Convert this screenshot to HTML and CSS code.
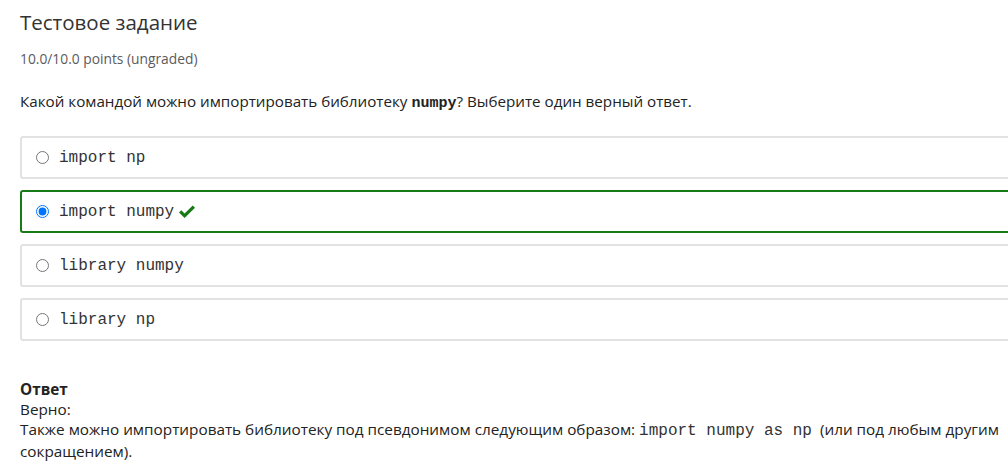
FILE: index.html
```html
<!DOCTYPE html>
<html lang="ru">
<head>
<meta charset="utf-8">
<link rel="stylesheet" href="styles.css">
</head>
<body>
<div class="problem">
  <h2 class="title">Тестовое задание</h2>
  <div class="points">10.0/10.0 points (ungraded)</div>
  <p class="question">Какой командой можно импортировать библиотеку <code class="qcode">numpy</code>? Выберите один верный ответ.</p>
  <div class="options">
    <label class="option"><input type="radio" name="q"><span class="code">import np</span></label>
    <label class="option correct"><input type="radio" name="q" checked><span class="code">import numpy</span>
      <svg class="check" viewBox="0 0 18 14" width="18" height="14"><path d="M1 7.5 L3.3 5.2 L6.6 8.5 L14.7 0.4 L17 2.7 L6.6 13.1 Z" fill="#167a16"/></svg>
    </label>
    <label class="option"><input type="radio" name="q"><span class="code">library numpy</span></label>
    <label class="option"><input type="radio" name="q"><span class="code">library np</span></label>
  </div>
  <div class="answer">
    <div class="answer-title">Ответ</div>
    <div>Верно:</div>
    <div>Также можно импортировать библиотеку под псевдонимом следующим образом: <code class="acode">import numpy as np</code> (или под любым другим сокращением).</div>
  </div>
</div>
</body>
</html>
```
FILE: styles.css
```css
html, body {
  margin: 0;
  padding: 0;
  background: #fff;
  overflow: hidden;
}
body {
  font-family: "Open Sans", "Noto Sans", sans-serif;
  color: #313131;
}
.problem {
  padding: 8px 0 0 20px;
  width: 1020px;
}
.title {
  margin: 0;
  font-size: 20.5px;
  font-weight: 400;
  line-height: 28px;
  color: #333;
}
.points {
  margin-top: 14px;
  font-size: 13.8px;
  line-height: 18px;
  color: #5b5b5b;
}
.question {
  margin: 22px 0 0;
  font-size: 15.2px;
  line-height: 22px;
  color: #222;
}
.qcode {
  font-family: "Liberation Mono", monospace;
  font-size: 15px;
  font-weight: 700;
}
.options {
  margin-top: 21px;
  display: flex;
  flex-direction: column;
  gap: 11px;
}
.option {
  display: flex;
  align-items: center;
  height: 43px;
  box-sizing: border-box;
  border: 2px solid #e2e2e2;
  border-radius: 3px;
  padding-left: 14px;
}
.option.correct {
  border-color: #167a16;
}
.option input {
  margin: 0 10px 0 0;
  width: 13px;
  height: 13px;
}
.code {
  font-family: "Liberation Mono", monospace;
  font-size: 16px;
  color: #333;
}
.check {
  margin-left: 4px;
}
.answer {
  margin-top: 38px;
  font-size: 15.3px;
  line-height: 20px;
  color: #222;
  width: 985px;
}
.answer-title {
  font-weight: 700;
}
.acode {
  font-family: "Liberation Mono", monospace;
  font-size: 16px;
  line-height: 20px;
  color: #333;
  margin-right: 4px;
}
```
